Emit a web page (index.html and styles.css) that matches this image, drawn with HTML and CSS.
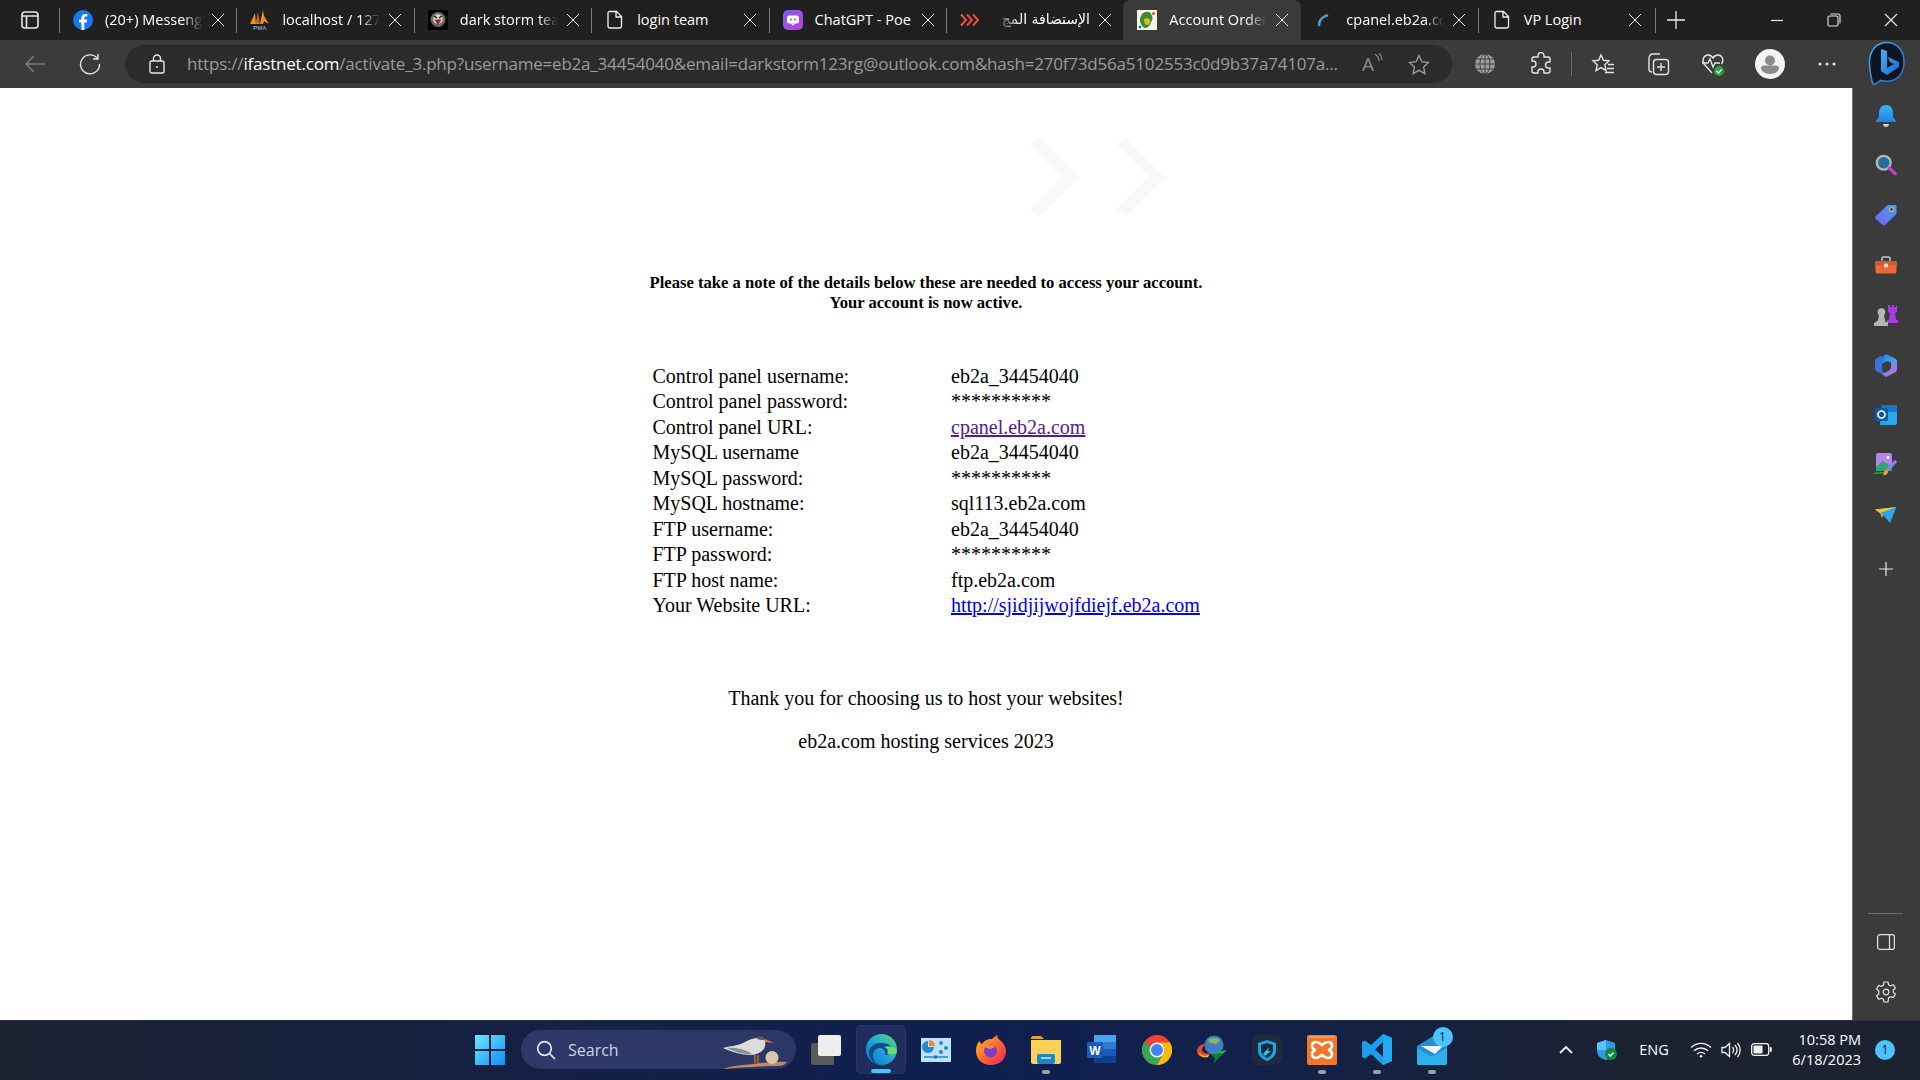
FILE: index.html
```html
<!DOCTYPE html>
<html lang="en">
<head>
<meta charset="utf-8">
<title>Account Order</title>
<link rel="stylesheet" href="styles.css">
</head>
<body>
<header class="tabstrip">
  <svg class="tab-actions" width="18" height="18" viewBox="0 0 18 18" fill="none" stroke="#e8e8e8" stroke-width="1.6"><rect x="1" y="1" width="16" height="16" rx="3"/><path d="M1 5h16M5.5 5v12"/></svg>
  <span class="sep"></span>
  <div class="tab">
    <svg class="fav" width="20" height="20" viewBox="0 0 20 20"><circle cx="10" cy="10" r="10" fill="#1877f2"/><path d="M11.3 20v-7.6h2.5l.4-2.8h-2.9V8c0-.8.3-1.4 1.5-1.4h1.5V4.100c-.5-.1-1.300-.2-2.200-.2-2.300 0-3.700 1.300-3.700 3.800v1.900H6v2.800h2.400V20z" fill="#fff"/></svg>
    <span class="tab-title">(20+) Messeng</span><span class="x"></span>
  </div>
  <span class="sep"></span>
  <div class="tab">
    <svg class="fav" width="20" height="20" viewBox="0 0 20 20"><path d="M0 14 5 3l1 11zM6 14l2-7 1 7zM10 14l3-14 1 6 5 8-5-3-1 3z" fill="#f29020"/><path d="M6 12 8 2l2 12z" fill="#c96a10"/><text x="10" y="19.500" class="pma">PMA</text></svg>
    <span class="tab-title">localhost / 127</span><span class="x"></span>
  </div>
  <span class="sep"></span>
  <div class="tab">
    <svg class="fav" width="20" height="20" viewBox="0 0 20 20"><rect width="20" height="20" fill="#000"/><circle cx="10" cy="9.500" r="7.500" fill="#6d6a66"/><circle cx="10" cy="9" r="4.800" fill="#d8d4cf"/><path d="M6.500 9.500h7L10 15z" fill="#a51d1d"/><path d="M6 6l3 2M14 6l-3 2" stroke="#111" stroke-width="1.400"/></svg>
    <span class="tab-title">dark storm tea</span><span class="x"></span>
  </div>
  <span class="sep"></span>
  <div class="tab">
    <svg class="fav" width="20" height="20" viewBox="0 0 20 20" fill="none" stroke="#eee" stroke-width="1.300"><path d="M4 1.500h7.500L16.500 6.500V16a2 2 0 0 1-2 2H5a2 2 0 0 1-2-2V3a1.500 1.500 0 0 1 1-1.500zM11 1.500V7h5.500"/></svg>
    <span class="tab-title nofade">login team</span><span class="x"></span>
  </div>
  <span class="sep"></span>
  <div class="tab">
    <svg class="fav" width="20" height="20" viewBox="0 0 20 20"><defs><linearGradient id="poe" x1="0" y1="0" x2="1" y2="1"><stop offset="0" stop-color="#7d5cf0"/><stop offset="1" stop-color="#c240d8"/></linearGradient></defs><rect width="20" height="20" rx="5" fill="url(#poe)"/><rect x="4" y="5.500" width="12" height="8" rx="2.500" fill="#fff"/><path d="M8 13.500h4L10 16z" fill="#fff"/><circle cx="8" cy="9.500" r="1" fill="#8a4de6"/><circle cx="12" cy="9.500" r="1" fill="#8a4de6"/></svg>
    <span class="tab-title nofade">ChatGPT - Poe</span><span class="x"></span>
  </div>
  <span class="sep"></span>
  <div class="tab">
    <svg class="fav" width="20" height="20" viewBox="0 0 20 20" fill="none" stroke="#e8503a" stroke-width="2"><path d="M1 4.500 6 10l-5 5.500M7 4.500l5 5.500-5 5.500M13 4.500l5 5.500-5 5.500"/></svg>
    <span class="tab-title rtl" dir="rtl" lang="ar">الإستضافة المج</span><span class="x"></span>
  </div>
  <div class="tab active">
    <svg class="fav" width="20" height="20" viewBox="0 0 20 20"><rect width="20" height="20" fill="#f4f4ee"/><path d="M5 4c3-3 8-3 9 0 2 2 2 6 0 8-1 3-2 5-5 6-3 0-4-2-5-4-2-3-1-7 1-10z" fill="#3f8a2e"/><path d="M7 9c2-1 5-1 6 1 0 3-1 5-3 5-2 0-3-3-3-6z" fill="#d9c21e"/><circle cx="16.500" cy="3.500" r="1.500" fill="#d8512a"/><circle cx="3" cy="17" r="1.300" fill="#2b6b1e"/></svg>
    <span class="tab-title">Account Order</span><span class="x"></span>
  </div>
  <div class="tab">
    <svg class="fav" width="20" height="20" viewBox="0 0 20 20" fill="none"><path d="M5 15C5.500 10 8 7 13 5.500" stroke="#4a9bdc" stroke-width="2.600" stroke-linecap="round" stroke-dasharray="5 1.500"/></svg>
    <span class="tab-title">cpanel.eb2a.cc</span><span class="x"></span>
  </div>
  <span class="sep"></span>
  <div class="tab">
    <svg class="fav" width="20" height="20" viewBox="0 0 20 20" fill="none" stroke="#eee" stroke-width="1.300"><path d="M4 1.500h7.500L16.500 6.500V16a2 2 0 0 1-2 2H5a2 2 0 0 1-2-2V3a1.500 1.500 0 0 1 1-1.500zM11 1.500V7h5.500"/></svg>
    <span class="tab-title nofade">VP Login</span><span class="x x-tight"></span>
  </div>
  <span class="sep"></span>
  <svg class="newtab" width="18" height="18" viewBox="0 0 18 18" stroke="#eee" stroke-width="1.300"><path d="M9 0v18M0 9h18"/></svg>
  <div class="winctl">
    <svg width="14" height="14" viewBox="0 0 14 14" stroke="#e6e6e6" stroke-width="1.200" fill="none"><path d="M1 7.500h12"/></svg>
    <svg width="14" height="14" viewBox="0 0 14 14" stroke="#e6e6e6" stroke-width="1.100" fill="none"><rect x="1" y="3" width="10" height="10" rx="1.500"/><path d="M3.500 1h7.500a2 2 0 0 1 2 2v7.500"/></svg>
    <svg width="14" height="14" viewBox="0 0 14 14" stroke="#e6e6e6" stroke-width="1.200" fill="none"><path d="M1 1l12 12M13 1 1 13"/></svg>
  </div>
</header>

<nav class="toolbar">
  <svg class="tb-back" width="22" height="20" viewBox="0 0 22 20" fill="none" stroke="#7c7c7c" stroke-width="1.500"><path d="M21 10H2M10 2l-8 8 8 8"/></svg>
  <svg class="tb-reload" width="22" height="22" viewBox="0 0 22 22" fill="none" stroke="#e4e4e4" stroke-width="1.400"><path d="M18.500 5.500A9.500 9.500 0 1 0 20.500 11"/><path d="M19 1v5h-5"/></svg>
  <div class="address">
    <svg class="lock" width="16" height="20" viewBox="0 0 16 20" fill="none" stroke="#e8e8e8" stroke-width="1.400"><rect x="1" y="7" width="14" height="12" rx="2"/><path d="M4.500 7V4.500a3.500 3.500 0 0 1 7 0V7"/><circle cx="8" cy="13" r="1" fill="#e8e8e8" stroke="none"/></svg>
    <div class="url"><span class="dim">https://</span><span class="host">ifastnet.com</span><span class="dim">/activate_3.php?username=eb2a_34454040&amp;email=darkstorm123rg@outlook.com&amp;hash=270f73d56a5102553c0d9b37a74107a...</span></div>
    <span class="aloud">A<svg width="9" height="14" viewBox="0 0 9 14" fill="none" stroke="#8f8f8f" stroke-width="1.100"><path d="M1 1c3 2 4 4 4 7M5 0c2 2 3 4 3 7"/></svg></span>
    <svg class="star" width="22" height="21" viewBox="0 0 22 21" fill="none" stroke="#9a9a9a" stroke-width="1.400"><path d="M11 1.500l2.900 6.200 6.600.8-4.900 4.600 1.300 6.600L11 16.400l-5.900 3.300 1.300-6.600L1.500 8.500l6.600-.8z"/></svg>
  </div>
  <div class="tb-tools">
    <svg class="tool" width="22" height="22" viewBox="0 0 22 22" fill="none"><circle cx="11" cy="11" r="10" fill="#9c9c9c"/><g stroke="#3b3b3b" stroke-width=".9"><path d="M1 11h20M2.500 6h17M2.500 16h17M11 1v20"/><ellipse cx="11" cy="11" rx="5" ry="10"/></g></svg>
    <svg class="tool" width="22" height="24" viewBox="0 0 22 24" fill="none" stroke="#e4e4e4" stroke-width="1.400"><path d="M8 3.500a3 3 0 0 1 6 0V5h4a2 2 0 0 1 2 2v3h-1.500a3 3 0 0 0 0 6H20v3a2 2 0 0 1-2 2h-4v-1a3 3 0 0 0-6 0v1H4a2 2 0 0 1-2-2v-4h1a3 3 0 0 0 0-6H2V7a2 2 0 0 1 2-2h4z"/></svg>
    <span class="tb-sep"></span>
    <svg class="tool" width="24" height="22" viewBox="0 0 24 22" fill="none" stroke="#e4e4e4" stroke-width="1.400"><path d="M10 2l2.400 5.300 5.600.6-4.200 3.900 1.200 5.700-5-2.900-5 2.900 1.200-5.700L2 7.900l5.600-.6zM17 11.500h6M16 15.500h7M14 19.500h9"/></svg>
    <svg class="tool" width="24" height="24" viewBox="0 0 24 24" fill="none" stroke="#e4e4e4" stroke-width="1.400"><path d="M6 20c-2 0-3-1-3-3V7c0-3 1-5 4-5h7"/><rect x="7.500" y="7.500" width="15" height="15" rx="3"/><path d="M15 11v8M11 15h8"/></svg>
    <svg class="tool" width="24" height="24" viewBox="0 0 24 24" fill="none" stroke="#e4e4e4" stroke-width="1.400"><path d="M11 21 3.500 12.500C0 8.500 3 3 7 3c2.500 0 4 1.500 5 3 1-1.500 2.500-3 5-3 4 0 6.500 5 3.500 9"/><path d="M1 11h6l2-4 3 8 2-4h5"/><circle cx="18" cy="19" r="5" fill="#2f9e44" stroke="none"/><path d="M15.500 19l2 2 3-3.500" stroke="#fff" stroke-width="1.200"/></svg>
    <span class="avatar"><svg width="30" height="30" viewBox="0 0 30 30"><circle cx="15" cy="15" r="15" fill="#f4f4f4"/><circle cx="15" cy="11.500" r="5" fill="#8b8b8b"/><path d="M6 19c0-2 2-2.500 4-2.500h10c2 0 4 .5 4 2.500 0 3-4 6-9 6s-9-3-9-6z" fill="#8b8b8b"/></svg></span>
    <svg class="tool" width="18" height="4" viewBox="0 0 18 4" fill="#e4e4e4"><circle cx="2" cy="2" r="1.500"/><circle cx="9" cy="2" r="1.500"/><circle cx="16" cy="2" r="1.500"/></svg>
    <svg class="bing" width="38" height="46" viewBox="0 0 38 46"><defs><linearGradient id="bg" x1="0" y1="0" x2="1" y2="1"><stop offset="0" stop-color="#38b6f0"/><stop offset="1" stop-color="#2563d8"/></linearGradient></defs><path d="M19 1.500C9 1.500 1.500 9 1.500 21c0 8 1.500 15 3 21 .3 1.500 1.500 1.800 3 .8l5-3.300c2 .5 4 .8 6.500.8 10 0 17-8 17-19.300S29 1.500 19 1.500z" fill="#0d1620" stroke="url(#bg)" stroke-width="1.500"/><path d="M13 8l6 2v17l7-4-4-2-2-5 11 5v5l-12 8-6-4z" fill="url(#bg)"/></svg>
  </div>
</nav>

<div class="main">
  <main class="page">
    <svg class="ghost" width="136" height="80" viewBox="0 0 136 80" fill="none" stroke="#f8f8f8" stroke-width="12"><path d="M4 4l36 36L4 76M91 4l36 36-36 36"/></svg>
    <p class="note">Please take a note of the details below these are needed to access your account.<br>Your account is now active.</p>
    <div class="details">
      <span class="key">Control panel username:</span><span>eb2a_34454040</span>
      <span class="key">Control panel password:</span><span>**********</span>
      <span class="key">Control panel URL:</span><span><a class="visited" href="#">cpanel.eb2a.com</a></span>
      <span class="key">MySQL username</span><span>eb2a_34454040</span>
      <span class="key">MySQL password:</span><span>**********</span>
      <span class="key">MySQL hostname:</span><span>sql113.eb2a.com</span>
      <span class="key">FTP username:</span><span>eb2a_34454040</span>
      <span class="key">FTP password:</span><span>**********</span>
      <span class="key">FTP host name:</span><span>ftp.eb2a.com</span>
      <span class="key">Your Website URL:</span><span><a class="fresh" href="#">http://sjidjijwojfdiejf.eb2a.com</a></span>
    </div>
    <p class="thanks">Thank you for choosing us to host your websites!</p>
    <p class="brand">eb2a.com hosting services 2023</p>
  </main>
  <aside class="sidebar">
    <span class="side-slot"><svg class="bell-icon" width="24" height="24" viewBox="0 0 24 24"><defs><linearGradient id="bell" x1="0" y1="0" x2="0" y2="1"><stop offset="0" stop-color="#38b6f4"/><stop offset="1" stop-color="#1a86e8"/></linearGradient></defs><path d="M12 1c-5 0-7 4-7 8v4l-3 4c0 1 .5 1 1 1h18c.5 0 1 0 1-1l-3-4V9c0-4-2-8-7-8z" fill="url(#bell)"/><path d="M9 20h6c0 2-1.500 3-3 3s-3-1-3-3z" fill="#cfcfcf"/></svg></span>
    <span class="side-slot"><svg width="22" height="22" viewBox="0 0 24 24" fill="none"><circle cx="9.500" cy="9.500" r="7.500" fill="#1f6f9f" stroke="#b5b5b5" stroke-width="2.600"/><path d="M15.500 15.500l6.500 6" stroke="#c040d8" stroke-width="3.400" stroke-linecap="round"/></svg></span>
    <span class="side-slot"><svg width="24" height="24" viewBox="0 0 24 24"><defs><linearGradient id="tag" x1="0" y1="1" x2="1" y2="0"><stop offset="0" stop-color="#7a62f0"/><stop offset="1" stop-color="#3fa0f0"/></linearGradient></defs><path d="M1.500 13.500 13 2.500c.6-.5 1-.5 1.800-.5H21c1 0 1.500.5 1.500 1.500V10c0 .8-.2 1.200-.8 1.800L11 22c-.7.700-1.600.7-2.300 0l-7.200-6.200c-.7-.7-.7-1.600 0-2.300z" fill="url(#tag)"/><circle cx="17.500" cy="6.500" r="2" fill="#2b3f88" stroke="#f0c020" stroke-width="1.200"/></svg></span>
    <span class="side-slot"><svg width="24" height="18" viewBox="0 0 24 18"><path d="M8 5V2.500C8 1.500 8.500 1 9.500 1h5c1 0 1.500.5 1.500 1.500V5" fill="none" stroke="#c8c8c8" stroke-width="1.500"/><path d="M1 5h22v4.500H1z" fill="#d4572a"/><path d="M1.500 9h21v6.500c0 1-.5 2-2 2h-17c-1.500 0-2-1-2-2z" fill="#e8693a"/><rect x="10" y="7.500" width="4" height="4" rx="1" fill="#d8d8d8"/></svg></span>
    <span class="side-slot"><svg width="24" height="24" viewBox="0 0 24 24"><path d="M14 2h2v2h2V2h2v2h2V2h1v7l-2 1 1 7h2v3H13v-3h2l1-7-2-1z" fill="#a93be6"/><circle cx="7.500" cy="9" r="3.800" fill="#b5b5b5"/><path d="M5 12h5l1.500 7H14v4H0v-2c0-2 3-2 4-4z" fill="#b5b5b5"/></svg></span>
    <span class="side-slot"><svg width="22" height="24" viewBox="0 0 22 24"><defs><linearGradient id="m3a" x1="0" y1="0" x2="1" y2="0"><stop offset="0" stop-color="#2a7fe0"/><stop offset="1" stop-color="#3fb4ea"/></linearGradient><linearGradient id="m3b" x1="0" y1="0" x2="1" y2="1"><stop offset="0" stop-color="#6a7fe8"/><stop offset="1" stop-color="#b07ae0"/></linearGradient></defs><path d="M11 1 20 5.500c1 .5 2 1.500 2 3V13l-6-3.500c-3-1.500-5-1-7 .5L7 11V4z" fill="url(#m3a)"/><path d="M0 8c0-1.500 1-2.500 2-3l5-2.500V16c0 2 1 3 3 4l3 2-2 1L2 18.500c-1-.5-2-1.500-2-3z" fill="#3a70dc"/><path d="M22 11v5.500c0 1.500-1 2.500-2 3L11 24l-4-3 6-3c2-1 3-2.500 3-5V8z" fill="url(#m3b)"/></svg></span>
    <span class="side-slot"><svg width="22" height="20" viewBox="0 0 22 20"><path d="M7 0h13c1 0 2 1 2 2v16c0 1-1 2-2 2H5z" fill="#28a8ea"/><path d="M7 0h15v7H7z" fill="#0f78d4"/><rect y="3" width="13" height="13" rx="2" fill="#0a5aa8"/><circle cx="6.500" cy="9.500" r="3.500" fill="none" stroke="#fff" stroke-width="1.700"/></svg></span>
    <span class="side-slot"><svg width="24" height="24" viewBox="0 0 24 24"><rect x="2" y="0" width="16" height="18" rx="2" fill="#b583e8"/><path d="M2 14l7-6 9 6v3c0 1-1 1-2 1H4c-1 0-2 0-2-1z" fill="#2fa66a"/><circle cx="14" cy="4.500" r="1.500" fill="#fff"/><path d="M22 8 11 19" stroke="#8a7cf0" stroke-width="3.400"/><path d="M12.500 17l-3 2 0 3.500 3-1 2-2.500z" fill="#f0a818"/><path d="M0 21c2-2 3 0 5-1s2 0 4 0" stroke="#2fa66a" stroke-width="1.300" fill="none"/></svg></span>
    <span class="side-slot"><svg width="22" height="16" viewBox="0 0 22 16"><path d="M0 2.500 21.500 0 15 16 10 10z" fill="#2ea6ee"/><path d="M0 2.500 21.500 0 5 6z" fill="#f4c430"/><path d="M5 6l2 5.500 1.500-4.500z" fill="#e89a20"/></svg></span>
    <span class="side-slot side-add"><svg width="14" height="14" viewBox="0 0 14 14" stroke="#e8e8e8" stroke-width="1.200"><path d="M7 0v14M0 7h14"/></svg></span>
    <div class="side-bottom">
      <span class="side-rule"></span>
      <span class="side-slot"><svg width="18" height="16" viewBox="0 0 18 16" fill="none" stroke="#e4e4e4" stroke-width="1.200"><rect x=".6" y=".6" width="16.800" height="14.800" rx="2.500"/><path d="M12.500.6v14.800"/></svg></span>
      <span class="side-slot"><svg width="22" height="22" viewBox="0 0 22 22" fill="none" stroke="#e4e4e4" stroke-width="1.200"><path d="M9 1h4l.6 2.800 2.100 1 2.700-1 2 3.400-2.200 1.900v2.200l2.200 1.900-2 3.400-2.700-1-2.100 1L13 21H9l-.6-2.800-2.100-1-2.700 1-2-3.400 2.200-1.900V9.700L1.600 7.800l2-3.400 2.700 1 2.100-1z"/><circle cx="11" cy="11" r="2.800"/></svg></span>
    </div>
  </aside>
</div>

<footer class="taskbar">
  <svg class="start" width="30" height="30" viewBox="0 0 30 30"><defs><linearGradient id="win" x1="0" y1="0" x2="1" y2="1"><stop offset="0" stop-color="#6fe6ff"/><stop offset="1" stop-color="#0f8ff0"/></linearGradient></defs><path d="M1 0h13v14H0V1c0-.5.5-1 1-1zM16 0h13c.5 0 1 .5 1 1v13H16zM0 16h14v14H1c-.5 0-1-.5-1-1zM16 16h14v13c0 .5-.5 1-1 1H16z" fill="url(#win)"/></svg>
  <div class="search">
    <svg width="20" height="20" viewBox="0 0 20 20" fill="none" stroke="#e6e8f0" stroke-width="1.700"><circle cx="8.500" cy="8.500" r="6.800"/><path d="M13.500 13.500 19 19"/></svg>
    <span class="search-label">Search</span>
    <svg class="bird" width="64" height="34" viewBox="0 0 64 34"><path d="M0 34c8-3 20-4 30-5 10-1 24-3 34-2-2 3-6 4-10 4-12 0-28 1-54 3z" fill="#c78a5a"/><path d="M0 13c7-2 14-2 20-5 6-3 12-6 18-5 4 1 5 4 4 8-1 5-7 9-14 9C18 20 9 17 0 13z" fill="#dcdcdc"/><path d="M4 13c8-1 18 1 25 6-8 1-17-2-25-6z" fill="#8e8e8e"/><path d="M33 3c3-3 8-2 9 2-3 0-7 0-9-2z" fill="#5c5c5c"/><path d="M42 4l9 4-9-1z" fill="#e8762a"/><path d="M32 20v8M35 20v8" stroke="#e8762a" stroke-width="1.200"/><ellipse cx="49" cy="22.500" rx="6.500" ry="6.500" fill="#d9c7ae"/></svg>
  </div>
  <div class="apps">
    <span class="app"><svg width="30" height="30" viewBox="0 0 30 30"><rect y="8" width="23" height="22" rx="2" fill="#5a5a5a"/><rect x="7" y="0" width="23" height="21" rx="2" fill="#eeeeee"/></svg></span>
    <span class="app app-active"><svg width="31" height="31" viewBox="0 0 31 31"><defs><linearGradient id="eg" x1="1" y1="0" x2="0" y2="1"><stop offset="0" stop-color="#5fd86a"/><stop offset=".5" stop-color="#1fa6d8"/><stop offset="1" stop-color="#1570c8"/></linearGradient></defs><circle cx="15.500" cy="15.500" r="15.500" fill="url(#eg)"/><path d="M3 20C2 13 8 9 15 9c7 0 12 3 13 8 0 3-3 4-6 4h-3c1-3-1-7-5-7-5 0-7 4-7 8 0 4 3 8 7 9C9 31 4 26 3 20z" fill="#0f4a8a"/><path d="M31 16c0 2-1 4-3 4-2 1-5 1-7 0 2-3 0-6-3-7 5-2 11 0 13 3z" fill="#63dd70"/></svg></span>
    <span class="app"><svg width="30" height="24" viewBox="0 0 30 24"><rect width="30" height="24" fill="#bfe3f4"/><path d="M7 3a6 6 0 1 0 6 6H7z" fill="#1f8ad8"/><path d="M8 2v6h6a6 6 0 0 0-6-6z" fill="#ef8a2a"/><g fill="#1f8ad8"><circle cx="20" cy="5" r="2"/><circle cx="25" cy="10" r="2"/><circle cx="20" cy="14" r="2"/></g><path d="M3 19h24" stroke="#1f8ad8" stroke-width="1.500"/><rect x="13" y="17.500" width="3" height="3" fill="#1f6fb8"/></svg></span>
    <span class="app"><svg width="30" height="30" viewBox="0 0 30 30"><defs><linearGradient id="ff" x1="0" y1="0" x2="1" y2="1"><stop offset="0" stop-color="#ffc030"/><stop offset=".6" stop-color="#ff5a30"/><stop offset="1" stop-color="#e8207a"/></linearGradient></defs><path d="M15 30C6 30 0 24 0 16 0 11 2 7 4 6c0 2 1 3 2 3 2-3 5-5 10-5l5-4c0 3 2 4 4 6 3 3 5 6 5 10 0 8-6 14-15 14z" fill="url(#ff)"/><circle cx="14.500" cy="16" r="6.500" fill="#7a3fc8"/><path d="M8 12c3-3 9-3 11 0l-5 2z" fill="#ff8a20"/></svg></span>
    <span class="app app-open"><svg width="30" height="28" viewBox="0 0 30 28"><path d="M0 2c0-1 1-2 2-2h8l3 3H0z" fill="#e0a820"/><path d="M0 4h30v22c0 1-1 2-2 2H2c-1 0-2-1-2-2z" fill="#fcd15a"/><rect x="6" y="18" width="18" height="10" rx="2" fill="#1d86c8"/><path d="M10 22h10" stroke="#bfe6fb" stroke-width="1.600"/></svg></span>
    <span class="app"><svg width="29" height="29" viewBox="0 0 29 29"><rect x="7" y="0" width="22" height="28" rx="1.500" fill="#2b7cd3"/><rect x="7" y="0" width="22" height="7" fill="#41a5ee"/><rect x="7" y="14" width="22" height="7" fill="#185abd"/><rect x="7" y="21" width="22" height="7" fill="#103f91"/><rect x="0" y="7" width="16" height="16" rx="1.500" fill="#1a5cbc"/><text x="8" y="19.500" class="word-w">W</text></svg></span>
    <span class="app"><svg width="30" height="30" viewBox="0 0 30 30"><circle cx="15" cy="15" r="15" fill="#eb4335"/><path d="M15 15 2 7.500A15 15 0 0 0 15 30l7.500-13z" fill="#34a853"/><path d="M15 7.500h13A15 15 0 0 1 15 30l7.500-13A8 8 0 0 0 15 7.500z" fill="#fbbc05"/><circle cx="15" cy="15" r="7.500" fill="#fff"/><circle cx="15" cy="15" r="6" fill="#4285f4"/></svg></span>
    <span class="app"><svg width="30" height="30" viewBox="0 0 30 30"><circle cx="17" cy="10" r="9.500" fill="#3f7fc0"/><path d="M11 5c3-3 9-3 12 0l-4 4-5-1z" fill="#8cb85a"/><path d="M0 16c0-5 6-8 12-8-4 1-7 4-7 7 0 3 4 4 8 3l-2 4c-6 1-11-1-11-6z" fill="#e84a30"/><path d="M2 17c1 3 5 5 10 3l-1 2c-5 1-9-1-9-5z" fill="#f4c430"/><path d="M30 15 14 19l4 5-2 5 7-7z" fill="#0f7a3a"/><path d="M30 15 14 19l12-1z" fill="#1fbf5a"/></svg></span>
    <span class="app"><svg width="30" height="30" viewBox="0 0 30 30"><rect width="30" height="30" rx="7" fill="#1f2a3d"/><path d="M15 5l9 3v7c0 6-4 9-9 11-5-2-9-5-9-11V8z" fill="#12a8e8"/><path d="M15 8l6 2v5c0 4-3 6-6 8-3-2-6-4-6-8v-5z" fill="#17263a"/><path d="M11 19l6-7-1 4 3 0-6 5z" fill="#27c4f0"/></svg></span>
    <span class="app app-open"><svg width="30" height="30" viewBox="0 0 30 30"><rect width="30" height="30" rx="2" fill="#f0782a"/><path d="M2 2h26" stroke="#f7b27e" stroke-width="1.200"/><path d="M9 7c3 0 4 2 6 3 2-1 3-3 6-3 3 0 4 2 4 4 0 3-3 4-4 4 1 0 4 1 4 4 0 2-1 4-4 4-3 0-4-2-6-3-2 1-3 3-6 3-3 0-4-2-4-4 0-3 3-4 4-4-1 0-4-1-4-4 0-2 1-4 4-4z" fill="none" stroke="#fff" stroke-width="2.600"/></svg></span>
    <span class="app app-open"><svg width="30" height="31" viewBox="0 0 30 31"><path d="M21 0l9 4v23l-9 4-12-11-6 4.500L0 23v-15l3-1.500L9 11zM21 8l-8 7.500 8 7.500z" fill="#1a9ee8"/><path d="M21 0l9 4v23l-9 4z" fill="#23a9f2"/></svg></span>
    <span class="app app-open mail"><svg width="30" height="30" viewBox="0 0 30 30"><path d="M0 11 18 0l12 11v17c0 1-1 2-2 2H2c-1 0-2-1-2-2z" fill="#1f8fd8"/><path d="M4 11h22l-8 8z" fill="#f6f6f6"/><path d="M0 13l15 9 15-9v15c0 1-1 2-2 2H2c-1 0-2-1-2-2z" fill="#2bb2ec"/></svg><span class="mail-badge">1</span></span>
  </div>
  <div class="tray">
    <svg class="tray-chev" width="14" height="9" viewBox="0 0 14 9" fill="none" stroke="#f2f2f2" stroke-width="1.800"><path d="M1 8l6-6 6 6"/></svg>
    <svg class="tray-shield" width="20" height="20" viewBox="0 0 20 20"><path d="M9 0l9 3v7c0 6-4 9-9 10-5-1-9-4-9-10V3z" fill="#2b9be8"/><path d="M9 0v10H0V3z" fill="#5ec0f4"/><circle cx="14" cy="14" r="6" fill="#108a3a"/><path d="M11.500 14l2 2 3-3.500" stroke="#fff" stroke-width="1.300" fill="none"/></svg>
    <span class="eng">ENG</span>
    <span class="tray-icon"><svg width="22" height="16" viewBox="0 0 22 16" fill="none" stroke="#f2f2f2" stroke-width="1.400"><path d="M1 5.500c6-5.500 14-5.500 20 0M4 8.800c4-3.800 10-3.800 14 0M7 12c2.500-2 5.500-2 8 0"/><circle cx="11" cy="14.300" r="1.300" fill="#f2f2f2" stroke="none"/></svg></span>
    <span class="tray-icon"><svg width="20" height="16" viewBox="0 0 20 16" fill="none" stroke="#f2f2f2" stroke-width="1.300"><path d="M1 5.500h3L8.500 1.500v13L4 10.500H1zM11.500 5c1.500 2 1.500 4 0 6M14 3c2.500 3 2.500 7 0 10M16.500 1c3.500 4 3.500 10 0 14"/></svg></span>
    <span class="tray-icon"><svg width="21" height="13" viewBox="0 0 21 13"><rect x=".7" y=".7" width="17" height="11.600" rx="2.500" fill="none" stroke="#f2f2f2" stroke-width="1.300"/><rect x="2.500" y="2.500" width="9" height="8" rx="1" fill="#f2f2f2"/><rect x="18.800" y="4" width="2" height="5" rx="1" fill="#f2f2f2"/></svg></span>
    <div class="clock"><span>10:58 PM</span><span>6/18/2023</span></div>
    <span class="notif">1</span>
  </div>
</footer>
</body>
</html>
```

FILE: styles.css
```css
* { box-sizing: border-box; }
html, body { margin: 0; height: 100%; }
body {
  width: 1920px;
  height: 1080px;
  overflow: hidden;
  display: flex;
  flex-direction: column;
  background: #fff;
  font-family: "Open Sans", "Noto Sans", "DejaVu Sans", sans-serif;
}

/* tab strip */
.tabstrip {
  height: 40px;
  flex: none;
  display: flex;
  align-items: center;
  background: #202020;
  padding-left: 21px;
  color: #fff;
}
.tab-actions { flex: none; margin-right: 20px; }
.sep { flex: none; width: 1px; height: 25px; background: #7a7a7a; }
.tab {
  flex: none;
  width: 176.4px;
  height: 40px;
  display: flex;
  align-items: center;
  padding-left: 13px;
}
.tab.active {
  width: 178px;
  padding-left: 14px;
  background: #3b3b3b;
  border-radius: 8px 8px 0 0;
}
.fav { flex: none; }
.tab-title {
  flex: none;
  width: 100px;
  margin-left: 12px;
  margin-bottom: 2px;
  font-size: 14.5px;
  white-space: nowrap;
  -webkit-mask-image: linear-gradient(to right, #000 78%, transparent 98%);
  mask-image: linear-gradient(to right, #000 78%, transparent 98%);
}
.tab-title.nofade { -webkit-mask-image: none; mask-image: none; }
.tab-title.rtl {
  -webkit-mask-image: linear-gradient(to left, #000 70%, transparent 100%);
  mask-image: linear-gradient(to left, #000 70%, transparent 100%);
  font-family: "DejaVu Sans", sans-serif;
  font-size: 14px;
  text-align: right;
  padding-right: 2px;
}
.x {
  flex: none;
  width: 12px;
  height: 12px;
  margin-left: 7px;
  background:
    linear-gradient(45deg, transparent 46%, #f0f0f0 46%, #f0f0f0 54%, transparent 54%),
    linear-gradient(-45deg, transparent 46%, #f0f0f0 46%, #f0f0f0 54%, transparent 54%);
}
.x.x-tight { margin-left: 5px; }
.pma { font: bold 6px "Liberation Sans", sans-serif; fill: #8a93b8; text-anchor: middle; }
.newtab { flex: none; margin-left: 11px; }
.winctl {
  margin-left: auto;
  display: flex;
  align-items: center;
  gap: 43px;
  padding-right: 22px;
}

/* toolbar */
.toolbar {
  height: 48px;
  flex: none;
  display: flex;
  align-items: center;
  background: #3b3b3b;
  padding-left: 24px;
}
.tb-back { flex: none; margin-right: 33px; }
.tb-reload { flex: none; margin-right: 24px; }
.address {
  flex: none;
  width: 1327px;
  height: 38px;
  display: flex;
  align-items: center;
  background: #2b2b2b;
  border-radius: 19px;
  padding-left: 24px;
}
.lock { flex: none; margin-right: 22px; }
.url {
  flex: none;
  width: 1153px;
  margin-bottom: 2px;
  font-size: 17px;
  letter-spacing: -0.2px;
  white-space: nowrap;
}
.dim { color: #9b9b9b; }
.host { color: #fff; }
.aloud {
  flex: none;
  margin-left: 22px;
  width: 22px;
  display: flex;
  align-items: flex-start;
  color: #8f8f8f;
  font-size: 19px;
  line-height: 22px;
}
.star { flex: none; margin-left: 24px; }
.tb-tools { flex: 1; display: flex; align-items: center; }
.tool { flex: none; }
.tb-tools > .tool:nth-child(1) { margin-left: 22px; }
.tb-tools > .tool:nth-child(2) { margin-left: 34px; }
.tb-sep { flex: none; width: 1px; height: 24px; background: #6a6a6a; margin-left: 19px; }
.tb-tools > .tool:nth-child(4) { margin-left: 19px; }
.tb-tools > .tool:nth-child(5) { margin-left: 31px; }
.tb-tools > .tool:nth-child(6) { margin-left: 31px; }
.avatar { flex: none; display: flex; margin-left: 30px; }
.tb-tools > .tool:nth-child(8) { margin-left: 33px; }
.bing { flex: none; margin-left: 32px; }

/* main area */
.main { flex: 1; display: flex; min-height: 0; }
.page {
  flex: 1;
  position: relative;
  padding-top: 185px;
  background: #fff;
  color: #000;
  font-family: "Liberation Serif", "Times New Roman", serif;
  font-size: 20px;
  text-align: center;
}
.ghost { position: absolute; left: 1030px; top: 49px; }
.note {
  margin: 0 0 50.5px;
  font-size: 16.6px;
  line-height: 20px;
  font-weight: bold;
}
.details {
  width: 553px;
  margin: 0 auto;
  display: grid;
  grid-template-columns: 301.5px 251.5px;
  grid-auto-rows: 25.5px;
  align-items: center;
  line-height: 23px;
  text-align: left;
  white-space: nowrap;
}
.key { padding-left: 3px; }
.visited { color: #551a8b; }
.fresh { color: #0000ee; }
.thanks { margin: 68.5px 0 0; line-height: 23px; }
.brand { margin: 20px 0 0; line-height: 23px; }

/* sidebar */
.sidebar {
  flex: none;
  width: 68px;
  display: flex;
  flex-direction: column;
  align-items: center;
  background: #3b3b3b;
  border-left: 1px solid #6e6e6e;
  padding: 2px 2px 0 0;
}
.side-slot {
  flex: none;
  width: 100%;
  height: 50px;
  display: flex;
  align-items: center;
  justify-content: center;
}
.bell-icon { margin-top: 2px; }
.side-add { margin-top: 4px; }
.side-bottom {
  margin-top: auto;
  width: 100%;
  display: flex;
  flex-direction: column;
  align-items: center;
  padding-bottom: 3px;
}
.side-rule { flex: none; width: 35px; height: 1px; background: #6e6e6e; margin-bottom: 3px; }

/* taskbar */
.taskbar {
  height: 60px;
  flex: none;
  display: flex;
  align-items: center;
  padding: 0 0 2px 475px;
  background: linear-gradient(to right, #1c2231 0%, #16213f 20%, #0f2050 50%, #13214a 65%, #1b2231 85%, #1c2230 100%);
  border-top: 1px solid #2a3045;
  color: #fff;
}
.start { flex: none; margin-right: 16px; }
.search {
  flex: none;
  width: 275px;
  height: 39px;
  display: flex;
  align-items: center;
  padding-left: 15px;
  border-radius: 20px;
  background: #2d3768;
}
.search-label { margin-left: 12px; font-size: 16px; color: #d0d4e2; }
.bird { margin-left: auto; margin-right: 9px; margin-top: 5px; }
.apps { flex: none; display: flex; align-items: center; margin-left: 2.5px; }
.app {
  flex: none;
  width: 55.1px;
  height: 49px;
  display: flex;
  align-items: center;
  justify-content: center;
  position: relative;
}
.app-active { background: #1f2c5e; border-radius: 5px; border: 1px solid #2a3668; width: 50px; margin: 0 2.55px; }
.app-active::after,
.app-open::after {
  content: "";
  position: absolute;
  left: 50%;
  bottom: 0;
  width: 8px;
  height: 4px;
  margin-left: -4px;
  border-radius: 2px;
  background: #9aa0ad;
}
.app-active::after { width: 20px; margin-left: -10px; background: #4cc2ff; }
.mail-badge {
  position: absolute;
  top: 2px;
  left: 28px;
  width: 20px;
  height: 20px;
  border-radius: 50%;
  background: #4cc2ff;
  color: #0b1b33;
  font-size: 12px;
  line-height: 20px;
  text-align: center;
}
.word-w { font: bold 12px "Liberation Sans", sans-serif; fill: #fff; text-anchor: middle; }
.tray { margin-left: auto; display: flex; align-items: center; padding-right: 25px; }
.tray-chev { flex: none; margin-right: 24px; }
.tray-shield { flex: none; margin-right: 17px; }
.eng { flex: none; width: 40px; text-align: center; font-size: 14.5px; margin-right: 12px; }
.tray-icon { flex: none; width: 30px; display: flex; justify-content: center; }
.clock {
  flex: none;
  width: 85px;
  display: flex;
  flex-direction: column;
  align-items: flex-end;
  font-size: 14.5px;
  line-height: 19.5px;
  margin-right: 14px;
}
.notif {
  flex: none;
  width: 20px;
  height: 20px;
  border-radius: 50%;
  background: #4cc2ff;
  color: #0b1b33;
  font-size: 12px;
  line-height: 20px;
  text-align: center;
}
```
